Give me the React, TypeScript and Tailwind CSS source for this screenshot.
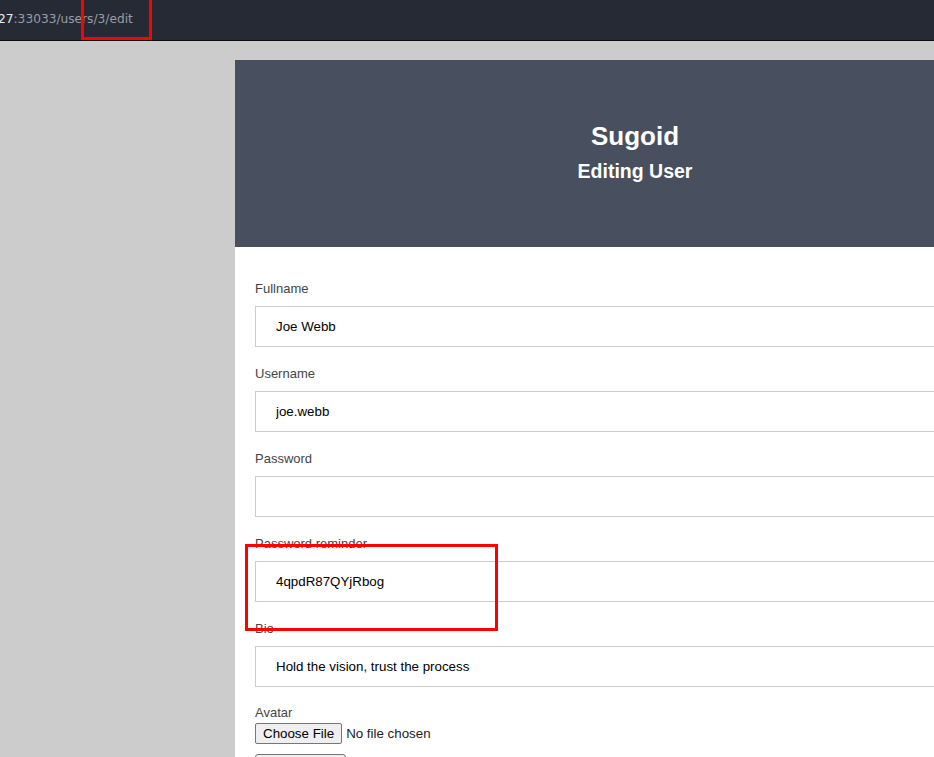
import React from 'react';

interface Field {
  label: string;
  value: string;
}

const fields: Field[] = [
  { label: 'Fullname', value: 'Joe Webb' },
  { label: 'Username', value: 'joe.webb' },
  { label: 'Password', value: '' },
  { label: 'Password reminder', value: '4qpdR87QYjRbog' },
  { label: 'Bio', value: 'Hold the vision, trust the process' },
];

export default function App() {
  return (
    <div className="relative w-[934px] h-[757px] overflow-hidden bg-[#cccccc] font-['Liberation_Sans',Arial,sans-serif]">
      {/* browser address bar */}
      <div className="h-[41px] bg-[#262a35] border-b border-[#0b0c10] flex items-center">
        <div className="-ml-[2px] pb-[2px] text-[12.2px] font-['DejaVu_Sans',sans-serif] text-[#9a9ea6]">
          <span className="text-[#ececec]">27</span>:33033/users/3/edit
        </div>
      </div>

      <div className="pt-[19px] pl-[235px]">
        <div className="w-[800px] bg-white">
          <div className="h-[187px] bg-[#484f5e] flex flex-col items-center justify-center text-white font-bold pb-[3px]">
            <h1 className="text-[26px] leading-[30px]">Sugoid</h1>
            <h2 className="text-[19.5px] leading-[24px] mt-[8px]">Editing User</h2>
          </div>

          <form className="px-[20px] pt-[34px] pb-[40px]">
            {fields.map((f) => (
              <div key={f.label} className="mb-[19px]">
                <label className="block text-[13px] leading-[16px] text-[#444] mb-[9px]">{f.label}</label>
                <input
                  type={f.label === 'Password' ? 'password' : 'text'}
                  defaultValue={f.value}
                  className="block w-full h-[41px] border border-[#cccccc] px-[20px] text-[13.33px] text-black outline-none"
                />
              </div>
            ))}
            <div className="-mt-[1px]">
              <label className="block text-[13px] leading-[16px] text-[#444]">Avatar</label>
              <div className="mt-[2px] flex items-center text-[13.33px] text-[#333]">
                <button type="button" className="h-[21px] px-[7px] border border-[#767676] rounded-[2px] bg-[#efefef] text-black leading-none">
                  Choose File
                </button>
                <span className="ml-[4px] text-[#222]">No file chosen</span>
              </div>
            </div>
            <button type="submit" className="mt-[10px] w-[91px] h-[26px] border border-[#767676] rounded-[3px] bg-[#efefef] text-[13px]">
              Update User
            </button>
          </form>
        </div>
      </div>

      {/* annotation boxes */}
      <div className="absolute left-[81px] -top-[3px] w-[71px] h-[43px] border-[3px] border-[#ff0000]" />
      <div className="absolute left-[245px] top-[544px] w-[253px] h-[87px] border-[3px] border-[#ff0000]" />
    </div>
  );
}
